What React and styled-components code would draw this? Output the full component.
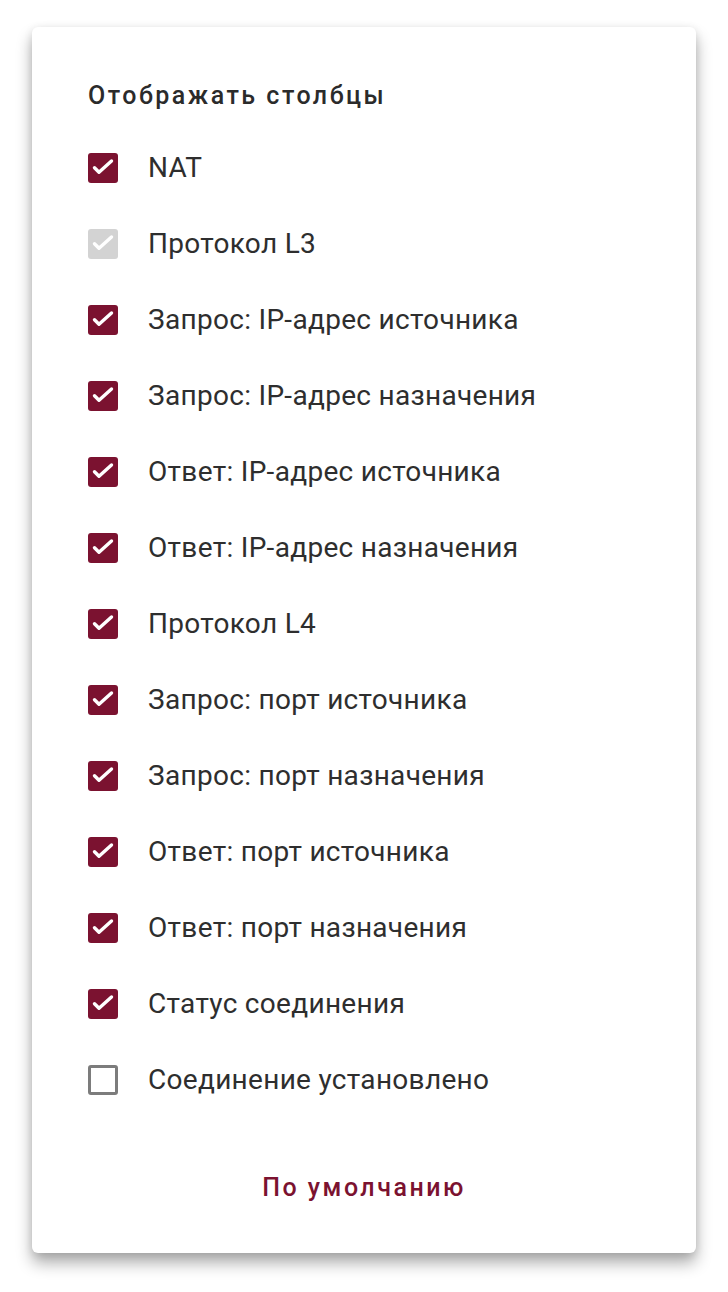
import React, { useState } from 'react';
import styled, { createGlobalStyle } from 'styled-components';

const GlobalStyle = createGlobalStyle`
  html, body {
    margin: 0;
    padding: 0;
    background: #fff;
  }
  body {
    font-family: Roboto, "Noto Sans", sans-serif;
    -webkit-font-smoothing: antialiased;
  }
`;

const COLUMNS = [
  { id: 'nat', label: 'NAT', checked: true },
  { id: 'l3', label: 'Протокол L3', checked: true, disabled: true },
  { id: 'reqSrcIp', label: 'Запрос: IP-адрес источника', checked: true },
  { id: 'reqDstIp', label: 'Запрос: IP-адрес назначения', checked: true },
  { id: 'resSrcIp', label: 'Ответ: IP-адрес источника', checked: true },
  { id: 'resDstIp', label: 'Ответ: IP-адрес назначения', checked: true },
  { id: 'l4', label: 'Протокол L4', checked: true },
  { id: 'reqSrcPort', label: 'Запрос: порт источника', checked: true },
  { id: 'reqDstPort', label: 'Запрос: порт назначения', checked: true },
  { id: 'resSrcPort', label: 'Ответ: порт источника', checked: true },
  { id: 'resDstPort', label: 'Ответ: порт назначения', checked: true },
  { id: 'state', label: 'Статус соединения', checked: true },
  { id: 'established', label: 'Соединение установлено', checked: false },
];

const CheckMark = () => (
  <svg width="30" height="30" viewBox="0 0 30 30">
    <polyline
      points="6.5,14.8 11,19.3 23.5,8"
      fill="none"
      stroke="#fff"
      strokeWidth="3.4"
      strokeLinecap="round"
      strokeLinejoin="round"
    />
  </svg>
);

export default function App() {
  const [columns, setColumns] = useState(COLUMNS);

  const toggle = (id) => {
    setColumns((prev) => prev.map((c) => (c.id === id && !c.disabled ? { ...c, checked: !c.checked } : c)));
  };

  const reset = () => setColumns(COLUMNS);

  return (
    <Page>
      <GlobalStyle />
      <Card>
        <Title>Отображать столбцы</Title>
        <List>
          {columns.map((col) => (
            <Row key={col.id} onClick={() => toggle(col.id)} disabled={col.disabled}>
              <Box checked={col.checked} disabled={col.disabled}>
                {col.checked && <CheckMark />}
              </Box>
              <Label>{col.label}</Label>
            </Row>
          ))}
        </List>
        <Footer>
          <ResetButton onClick={reset}>По умолчанию</ResetButton>
        </Footer>
      </Card>
    </Page>
  );
}

const Page = styled.div`
  min-height: 1292px;
  padding: 27px 0 0 32px;
  box-sizing: border-box;
`;

const Card = styled.div`
  box-sizing: border-box;
  width: 664px;
  height: 1226px;
  padding: 53px 0 36px 56px;
  background: #fff;
  border-radius: 6px;
  box-shadow: 0 10px 16px rgba(0, 0, 0, 0.32), 0 2px 8px rgba(0, 0, 0, 0.1);
  display: flex;
  flex-direction: column;
`;

const Title = styled.div`
  font-size: 25px;
  line-height: 32px;
  font-weight: 500;
  color: #2b2b2b;
  letter-spacing: 2.5px;
  margin-bottom: 18px;
`;

const List = styled.div`
  display: flex;
  flex-direction: column;
`;

const Row = styled.label`
  display: flex;
  align-items: center;
  height: 76px;
  gap: 30px;
  cursor: ${({ disabled }) => (disabled ? 'default' : 'pointer')};
`;

const Box = styled.span`
  box-sizing: border-box;
  width: 30px;
  height: 30px;
  flex: none;
  border-radius: 3px;
  display: flex;
  align-items: center;
  justify-content: center;
  background: ${({ checked, disabled }) => (disabled ? '#d3d3d3' : checked ? '#7b1230' : '#fff')};
  border: ${({ checked, disabled }) => (checked || disabled ? 'none' : '3px solid #7c7c7c')};
`;

const Label = styled.span`
  font-size: 28px;
  line-height: 32px;
  color: #2e2e2e;
  letter-spacing: 0.3px;
`;

const Footer = styled.div`
  margin-top: auto;
  display: flex;
  justify-content: center;
  padding-right: 56px;
`;

const ResetButton = styled.button`
  border: none;
  background: none;
  height: 60px;
  padding: 0 16px;
  font-family: Roboto, sans-serif;
  font-size: 25px;
  font-weight: 500;
  letter-spacing: 2.5px;
  color: #7b1230;
  cursor: pointer;
`;
